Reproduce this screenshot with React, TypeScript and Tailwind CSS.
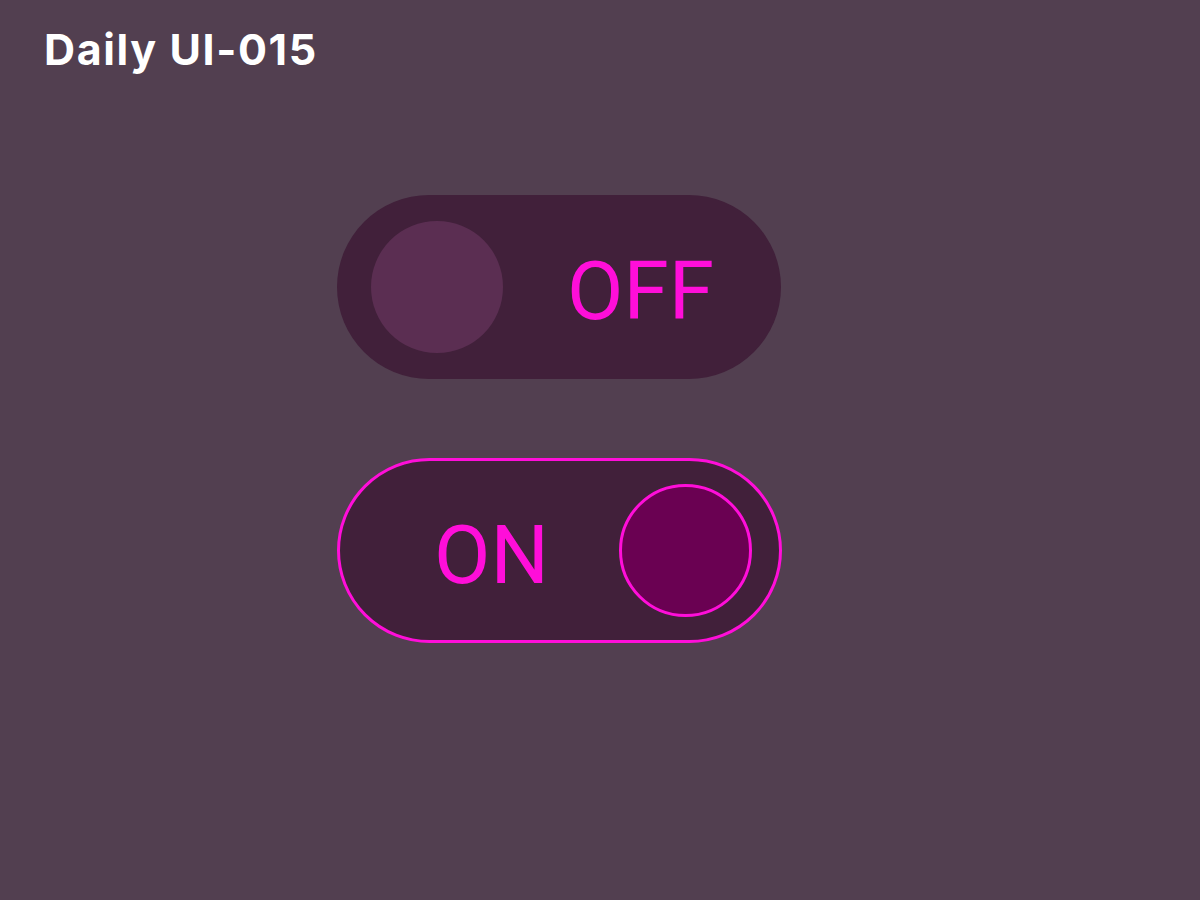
export default function App() {
  return (
    <div className="min-h-[900px] w-full bg-[#523f50] font-['Inter',sans-serif]">
      <h1 className="pl-[44px] pt-[24px] text-[43px] font-bold leading-[50px] tracking-[1.6px] text-white">
        Daily UI-015
      </h1>

      <div className="ml-[337px] mt-[121px] flex flex-col gap-[79px]">
        {/* off state */}
        <div className="flex h-[184px] w-[444px] items-center rounded-full bg-[#41203a]">
          <div className="ml-[34px] h-[132px] w-[132px] rounded-full bg-[#5b2e52]" />
          <span className="ml-[64px] pt-[8px] font-['Roboto',sans-serif] text-[82px] font-normal leading-none text-[#ff0ed9]">
            OFF
          </span>
        </div>

        {/* on state */}
        <div className="flex h-[185px] w-[445px] items-center rounded-full border-[3px] border-[#ff0ed9] bg-[#41203a]">
          <span className="ml-[94px] pt-[8px] font-['Roboto',sans-serif] text-[82px] font-normal leading-none text-[#ff0ed9]">
            ON
          </span>
          <div className="ml-auto mr-[27px] h-[133px] w-[133px] rounded-full border-[3px] border-[#ff0ed9] bg-[#6a0152]" />
        </div>
      </div>
    </div>
  );
}
